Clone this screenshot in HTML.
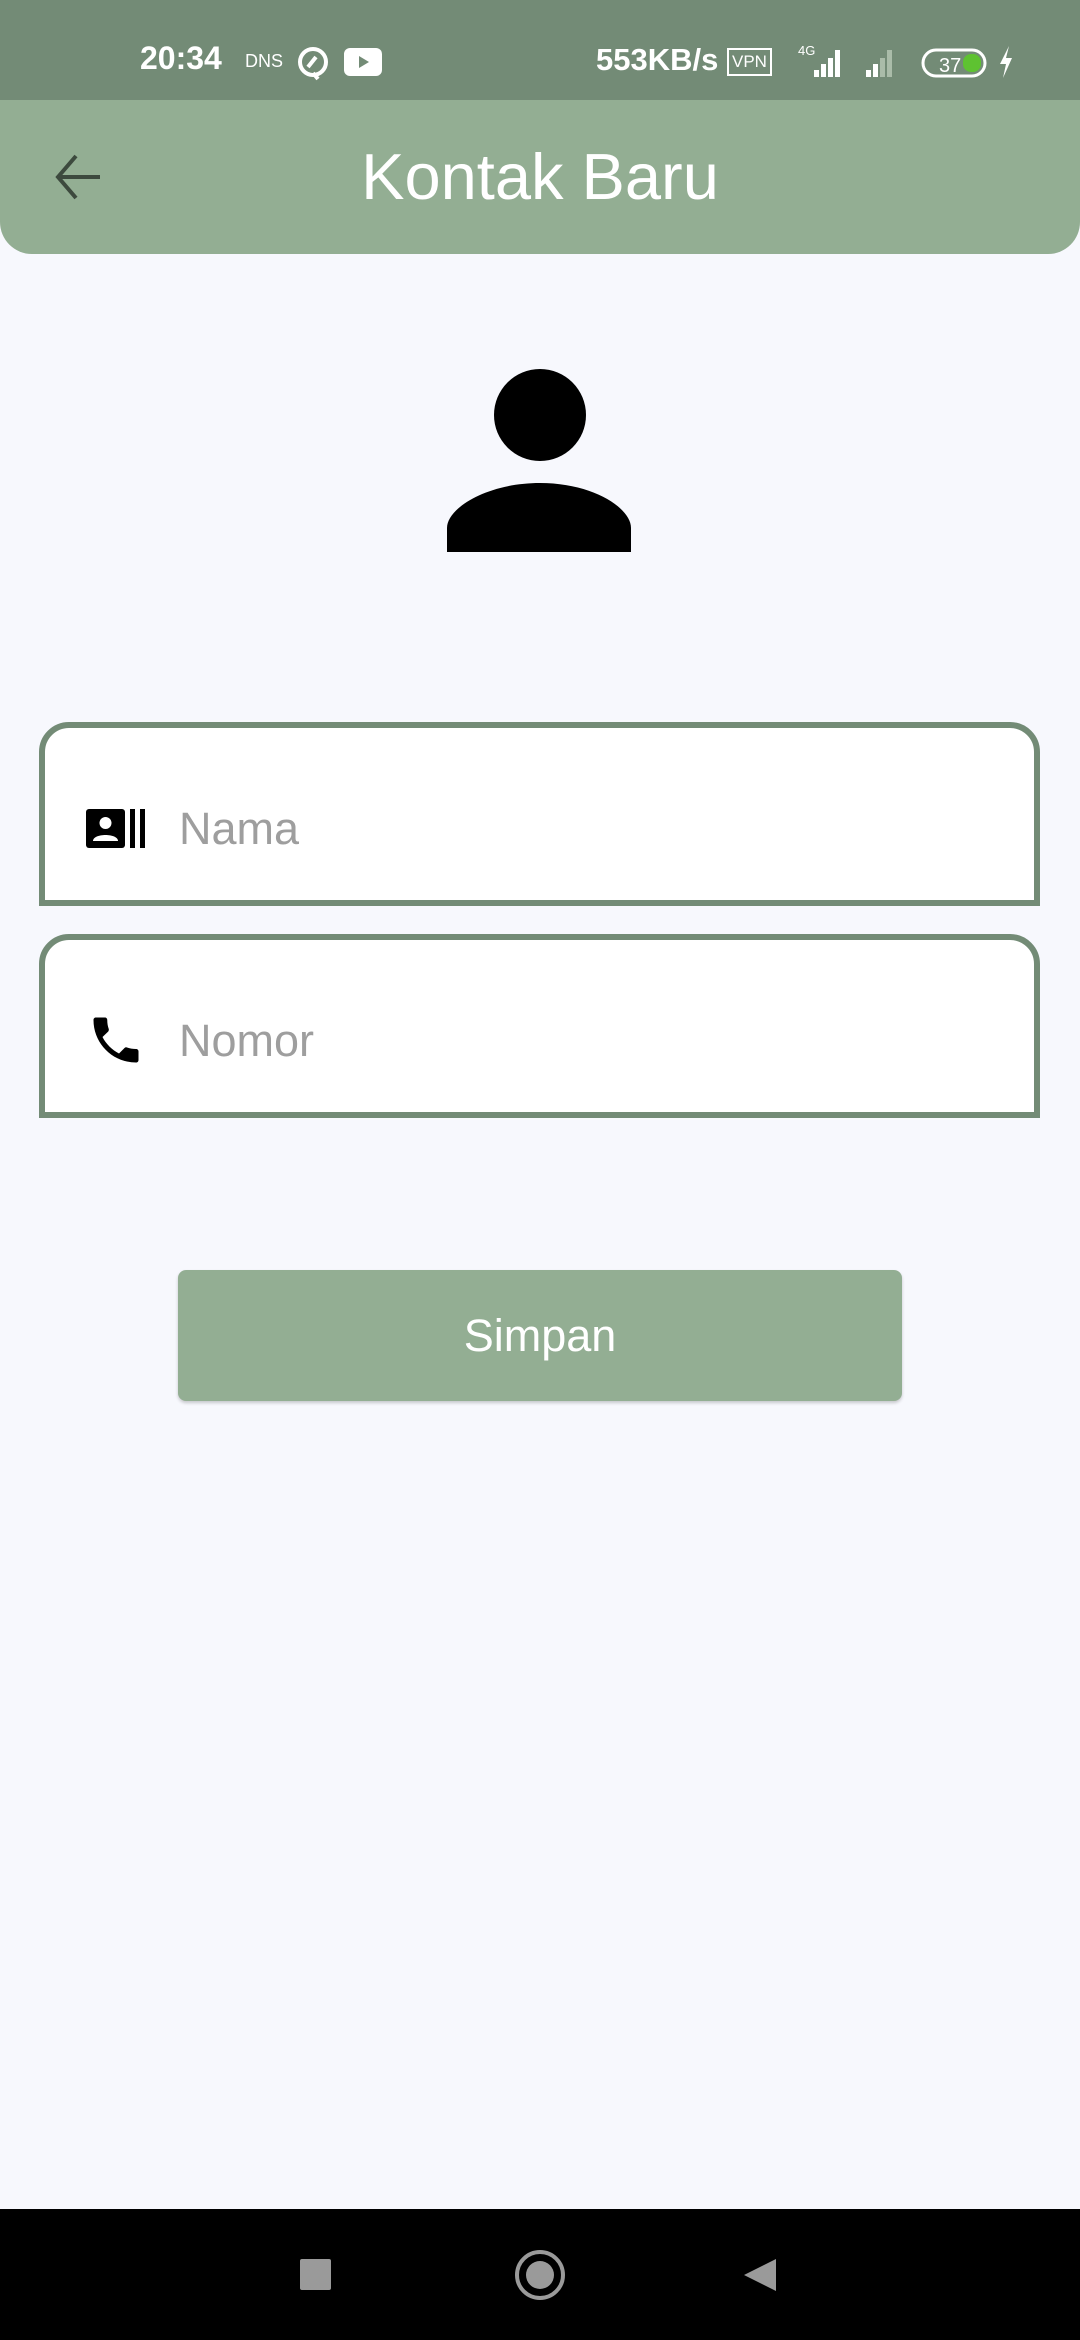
<!DOCTYPE html>
<html><head><meta charset="utf-8"><style>
*{margin:0;padding:0;box-sizing:border-box}
body{width:1080px;height:2340px;background:#f7f8fd;position:relative;overflow:hidden;font-family:"Liberation Sans",sans-serif}
.sb{position:absolute;left:0;top:0;width:1080px;height:100px;background:#738b76;color:#fff}
.ab{position:absolute;left:0;top:100px;width:1080px;height:154px;background:#93ae93;border-radius:0 0 32px 32px}
.title{position:absolute;left:0;width:1080px;top:139px;text-align:center;color:#fff;font-size:65px;line-height:76px}
.field{position:absolute;left:39px;width:1001px;height:184px;border:6px solid #738b76;border-radius:30px 30px 0 0;background:#fff}
.ph{position:absolute;left:134px;top:73px;font-size:45px;color:#9e9e9e;line-height:56px}
.btn{position:absolute;left:178px;top:1270px;width:724px;height:131px;background:#93ae93;border-radius:8px;color:#fff;font-size:45px;text-align:center;line-height:131px;box-shadow:0 2px 3px rgba(0,0,0,.2)}
.nav{position:absolute;left:0;top:2209px;width:1080px;height:131px;background:#000}
</style></head><body>
<div class="sb">
<div style="position:absolute;left:140px;top:40px;font-size:32px;font-weight:bold">20:34</div>
<div style="position:absolute;left:245px;top:51px;font-size:18px">DNS</div>
<svg style="position:absolute;left:296px;top:45px" width="34" height="36" viewBox="0 0 34 36"><circle cx="17" cy="17" r="13" fill="none" stroke="#fff" stroke-width="4"/><path d="M12 22 L20 12 M17 28 L22 34" stroke="#fff" stroke-width="4"/></svg>
<svg style="position:absolute;left:344px;top:48px" width="38" height="28"><rect width="38" height="28" rx="6" fill="#fff"/><path d="M15 8 L25 14 L15 20Z" fill="#738b76"/></svg>
<div style="position:absolute;left:596px;top:42px;font-size:31px;font-weight:bold">553KB/s</div>
<div style="position:absolute;left:727px;top:48px;font-size:17px;border:2px solid #fff;padding:1px 3px;line-height:22px">VPN</div>
<div style="position:absolute;left:798px;top:43px;font-size:13px">4G</div>
<svg style="position:absolute;left:808px;top:46px" width="100" height="32"><rect x="6" y="24" width="5" height="7" fill="#fff"/><rect x="13" y="18" width="5" height="13" fill="#fff"/><rect x="20" y="12" width="5" height="19" fill="#fff"/><rect x="27" y="4" width="5" height="27" fill="#fff"/><rect x="58" y="24" width="5" height="7" fill="#fff"/><rect x="65" y="18" width="5" height="13" fill="#fff"/><rect x="72" y="12" width="5" height="19" fill="#aabca9"/><rect x="79" y="4" width="5" height="27" fill="#aabca9"/></svg>
<svg style="position:absolute;left:921px;top:48px" width="70" height="30"><rect x="2" y="2" width="62" height="26" rx="13" fill="none" stroke="#fff" stroke-width="3"/><rect x="42" y="6" width="18" height="18" rx="8" fill="#5ec231"/><text x="18" y="24" font-size="20" fill="#fff" font-family="Liberation Sans">37</text></svg>
<svg style="position:absolute;left:998px;top:46px" width="16" height="32"><path d="M11 0 L2 18 L8 18 L5 32 L14 12 L8 12Z" fill="#fff"/></svg>
</div>
<div class="ab"></div>
<svg style="position:absolute;left:54px;top:154px" width="48" height="46" viewBox="0 0 48 46"><path d="M22 2 L4 23 L22 44 M4 23 H46" stroke="#3d4a3e" stroke-width="4" fill="none"/></svg>
<div class="title">Kontak Baru</div>
<svg style="position:absolute;left:447px;top:368px" width="184" height="184" viewBox="0 0 184 184"><circle cx="93" cy="47" r="46" fill="#000"/><path d="M0 184 V160 C0 140 40 115 93 115 C146 115 184 140 184 160 V184Z" fill="#000"/></svg>
<div class="field" style="top:722px">
<svg style="position:absolute;left:41px;top:81px" width="61" height="39" viewBox="0 0 61 39"><rect width="39" height="39" rx="3" fill="#000"/><circle cx="19.5" cy="14" r="6" fill="#fff"/><path d="M7 32 C7 24 32 24 32 32Z" fill="#fff"/><rect x="44" y="0" width="5" height="39" fill="#000"/><rect x="54" y="0" width="5" height="39" fill="#000"/></svg>
<div class="ph">Nama</div>
</div>
<div class="field" style="top:934px">
<svg style="position:absolute;left:41px;top:70px" width="60" height="60" viewBox="0 0 24 24"><path d="M6.6 10.8c1.4 2.8 3.8 5.1 6.6 6.6l2.2-2.2c.3-.3.7-.4 1-.2 1.1.4 2.3.6 3.6.6.6 0 1 .4 1 1V20c0 .6-.4 1-1 1C10.6 21 3 13.4 3 4c0-.6.4-1 1-1h3.5c.6 0 1 .4 1 1 0 1.3.2 2.5.6 3.6.1.3 0 .7-.2 1L6.6 10.8z" fill="#000"/></svg>
<div class="ph">Nomor</div>
</div>
<div class="btn">Simpan</div>
<div class="nav">
<div style="position:absolute;left:300px;top:50px;width:31px;height:31px;background:#9a9a9a;border-radius:2px"></div>
<div style="position:absolute;left:515px;top:41px;width:50px;height:50px;border:4px solid #9a9a9a;border-radius:50%"></div>
<div style="position:absolute;left:526px;top:52px;width:28px;height:28px;background:#9a9a9a;border-radius:50%"></div>
<svg style="position:absolute;left:742px;top:48px" width="36" height="36"><path d="M34 2 V34 L2 18Z" fill="#9a9a9a"/></svg>
</div>
</body></html>
